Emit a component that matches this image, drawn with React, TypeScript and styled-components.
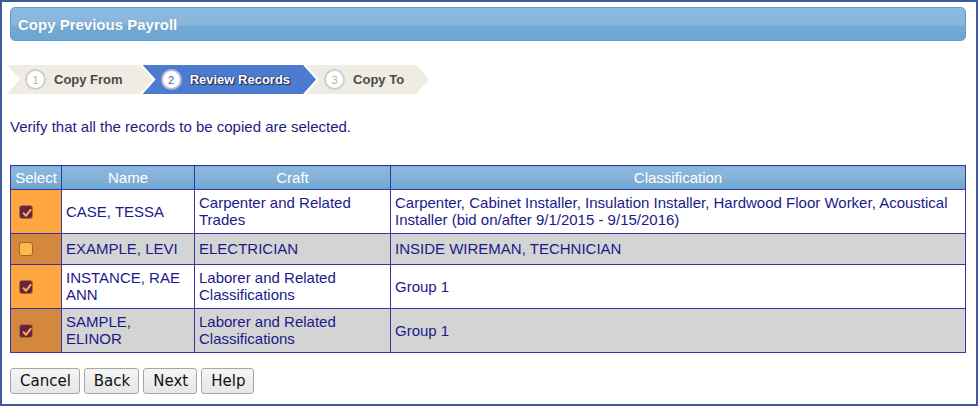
import React from "react";
import styled, { createGlobalStyle } from "styled-components";

const Global = createGlobalStyle`
  html, body { margin: 0; padding: 0; background: #ffffff; }
  body { font-family: "Liberation Sans", Arial, sans-serif; }
  * { box-sizing: border-box; }
`;

const Frame = styled.div`
  width: 978px;
  height: 406px;
  border: 2px solid #3d5c99;
  padding: 5px 10px 0 8px;
  display: flex;
  flex-direction: column;
  background: #ffffff;
`;

const TitleBar = styled.div`
  height: 34px;
  border: 1px solid #5b9cd3;
  border-radius: 5px;
  background: linear-gradient(
    to bottom,
    #8dbade 0%,
    #88b5db 52%,
    #73a9d3 58%,
    #6ea6d1 100%
  );
  display: flex;
  align-items: center;
  padding-left: 7px;
  color: #ffffff;
  font-weight: bold;
  font-size: 15px;
  text-shadow: 0 0 1px rgba(40, 80, 130, 0.4);
`;

const Steps = styled.div`
  display: flex;
  margin: 24px 0 0 -3px;
  height: 29px;
`;

const Step = styled.div<{ $active?: boolean; $tail: number; $first?: boolean }>`
  height: 29px;
  display: flex;
  align-items: center;
  gap: 8px;
  padding: 0 ${(p) => p.$tail}px 0 18px;
  margin-left: ${(p) => (p.$first ? 0 : -10)}px;
  background: ${(p) => (p.$active ? "#4c7bd0" : "#efece3")};
  clip-path: polygon(
    0 0,
    calc(100% - 13px) 0,
    100% 50%,
    calc(100% - 13px) 100%,
    0 100%,
    13px 50%
  );
  font-size: 13px;
  font-weight: bold;
  color: ${(p) => (p.$active ? "#ffffff" : "#4a4a4a")};
  text-shadow: ${(p) =>
    p.$active ? "1px 1px 1px #1c2b4a, 0 0 2px #1c2b4a" : "none"};
`;

const StepNum = styled.span<{ $active?: boolean }>`
  width: 21px;
  height: 21px;
  border-radius: 50%;
  background: #ffffff;
  border: 2px solid ${(p) => (p.$active ? "#aebccf" : "#cfcfcf")};
  display: flex;
  align-items: center;
  justify-content: center;
  font-size: 11px;
  font-weight: normal;
  color: ${(p) => (p.$active ? "#3a64b8" : "#b4b4b4")};
  text-shadow: none;
  flex: none;
`;

const Intro = styled.p`
  margin: 24px 0 0 0;
  font-size: 15px;
  line-height: 17px;
  color: #1e1e82;
`;

const Table = styled.table`
  margin: 30px 0 0 0;
  width: 956px;
  border-collapse: collapse;
  table-layout: fixed;
  border: 1px solid #3535a0;
  font-size: 15px;
  line-height: 17px;
`;

const HeadCell = styled.th`
  border: 1px solid #3535a0;
  background: linear-gradient(to bottom, #8bb8dd 0%, #84b2d9 50%, #6ca5d0 100%);
  color: #ffffff;
  font-weight: normal;
  padding: 3px 2px;
  height: 24px;
  text-align: center;
`;

const Row = styled.tr<{ $shade?: boolean }>`
  background: ${(p) => (p.$shade ? "#d4d4d4" : "#ffffff")};
`;

const SelectCell = styled.td<{ $shade?: boolean }>`
  border: 1px solid #3535a0;
  background: ${(p) => (p.$shade ? "#d4873f" : "#ffa640")};
  padding: 4px 0 4px 8px;
  vertical-align: middle;
  height: 31px;
`;

const Cell = styled.td`
  border: 1px solid #3535a0;
  color: #1a1a8a;
  padding: 4px 5px 5px 4px;
  vertical-align: middle;
  height: 31px;
`;

const Box = styled.span<{ $checked?: boolean }>`
  display: block;
  width: 14px;
  height: 14px;
  border-radius: 3px;
  border: 1px solid ${(p) => (p.$checked ? "#a2742e" : "#9a6b25")};
  background: ${(p) => (p.$checked ? "#6c1f46" : "#ffb84c")};
  position: relative;
  svg {
    position: absolute;
    left: 1px;
    top: 1px;
  }
`;

const Buttons = styled.div`
  display: flex;
  gap: 4px;
  margin: 15px 0 0 0;
`;

const Button = styled.button`
  height: 26px;
  padding: 0 8px 0 9px;
  border: 1px solid #a6a6a6;
  border-radius: 3px;
  background: linear-gradient(to bottom, #f5f5f5, #e6e6e6);
  font-family: "DejaVu Sans", Verdana, sans-serif;
  font-size: 15px;
  color: #111111;
`;

const Check = ({ checked }: { checked: boolean }) => (
  <Box $checked={checked}>
    {checked && (
      <svg width="12" height="12" viewBox="0 0 12 12">
        <path
          d="M2.6 6.3 L5 8.8 L9.6 2.8"
          fill="none"
          stroke="#f2b446"
          strokeWidth="2.1"
          strokeLinecap="round"
          strokeLinejoin="round"
        />
      </svg>
    )}
  </Box>
);

const rows = [
  {
    checked: true,
    name: "CASE, TESSA",
    craft: "Carpenter and Related Trades",
    cls: "Carpenter, Cabinet Installer, Insulation Installer, Hardwood Floor Worker, Acoustical Installer (bid on/after 9/1/2015 - 9/15/2016)",
  },
  {
    checked: false,
    name: "EXAMPLE, LEVI",
    craft: "ELECTRICIAN",
    cls: "INSIDE WIREMAN, TECHNICIAN",
  },
  {
    checked: true,
    name: "INSTANCE, RAE ANN",
    craft: "Laborer and Related Classifications",
    cls: "Group 1",
  },
  {
    checked: true,
    name: "SAMPLE, ELINOR",
    craft: "Laborer and Related Classifications",
    cls: "Group 1",
  },
];

export default function App() {
  return (
    <>
      <Global />
      <Frame>
        <TitleBar>Copy Previous Payroll</TitleBar>
        <Steps>
          <Step $first $tail={30}>
            <StepNum>1</StepNum>
            Copy From
          </Step>
          <Step $active $tail={26}>
            <StepNum $active>2</StepNum>
            Review Records
          </Step>
          <Step $tail={25}>
            <StepNum>3</StepNum>
            Copy To
          </Step>
        </Steps>
        <Intro>Verify that all the records to be copied are selected.</Intro>
        <Table>
          <colgroup>
            <col style={{ width: 51 }} />
            <col style={{ width: 133 }} />
            <col style={{ width: 196 }} />
            <col />
          </colgroup>
          <thead>
            <tr>
              <HeadCell>Select</HeadCell>
              <HeadCell>Name</HeadCell>
              <HeadCell>Craft</HeadCell>
              <HeadCell>Classification</HeadCell>
            </tr>
          </thead>
          <tbody>
            {rows.map((r, i) => (
              <Row key={r.name} $shade={i % 2 === 1}>
                <SelectCell $shade={i % 2 === 1}>
                  <Check checked={r.checked} />
                </SelectCell>
                <Cell>{r.name}</Cell>
                <Cell>{r.craft}</Cell>
                <Cell>{r.cls}</Cell>
              </Row>
            ))}
          </tbody>
        </Table>
        <Buttons>
          <Button>Cancel</Button>
          <Button>Back</Button>
          <Button>Next</Button>
          <Button>Help</Button>
        </Buttons>
      </Frame>
    </>
  );
}
